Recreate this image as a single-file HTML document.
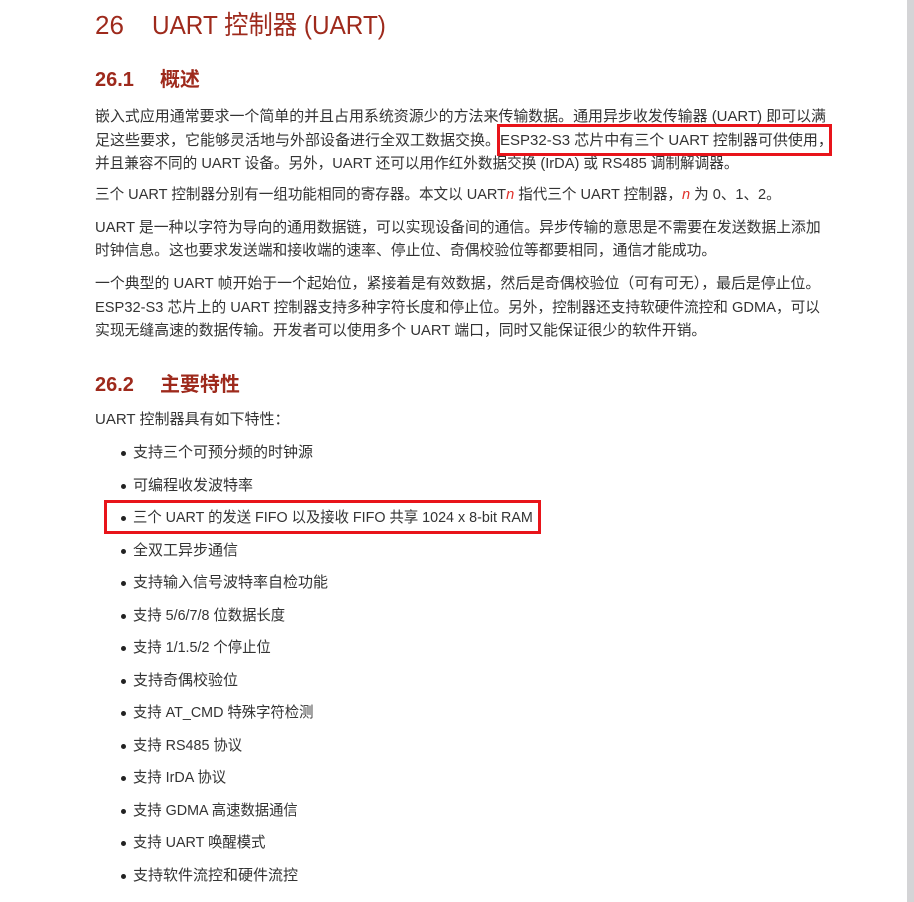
<!DOCTYPE html>
<html><head><meta charset="utf-8"><style>
html,body{margin:0;padding:0;background:#fff;}
body{width:914px;height:902px;position:relative;overflow:hidden;font-family:"Liberation Sans","Noto Sans CJK SC",sans-serif;color:#333;}
.strip{position:absolute;left:907px;top:0;width:7px;height:902px;background:#d4d4d6;}
.l{position:absolute;left:95px;white-space:nowrap;font-size:15px;line-height:20px;transform-origin:0 0;}
.h{position:absolute;left:95px;white-space:nowrap;color:#9e2a1c;}
.b{position:absolute;left:133px;white-space:nowrap;font-size:15px;line-height:20px;}
.b:before{content:"";position:absolute;left:-12px;top:8px;width:5px;height:5px;border-radius:50%;background:#222;}
.b span{display:inline-block;transform-origin:0 0;transform:scaleX(0.955);}
.n{color:#e0302a;font-style:italic;}
.box{position:absolute;border:3px solid #e8141a;box-sizing:border-box;}
</style></head><body>
<div class="strip"></div>
<div class="h" style="top:8px;font-size:26px;line-height:34px;">26<span style="display:inline-block;width:28px"></span><span style="display:inline-block;transform-origin:0 0;transform:scaleX(0.936)">UART 控制器 (UART)</span></div>
<div class="h" style="top:66px;font-size:20px;line-height:28px;font-weight:bold;">26.1<span style="display:inline-block;width:26px"></span>概述</div>
<div class="l" style="top:107px;transform:scaleX(0.996)">嵌入式应用通常要求一个简单的并且占用系统资源少的方法来传输数据。通用异步收发传输器 (UART) 即可以满</div>
<div class="l" style="top:131px">足这些要求，它能够灵活地与外部设备进行全双工数据交换。ESP32-S3 芯片中有三个 UART 控制器可供使用，</div>
<div class="l" style="top:154px;transform:scaleX(0.974)">并且兼容不同的 UART 设备。另外，UART 还可以用作红外数据交换 (IrDA) 或 RS485 调制解调器。</div>
<div class="l" style="top:185px;transform:scaleX(0.971)">三个 UART 控制器分别有一组功能相同的寄存器。本文以 UART<span class="n">n</span> 指代三个 UART 控制器，<span class="n">n</span> 为 0、1、2。</div>
<div class="l" style="top:218px;transform:scaleX(0.988)">UART 是一种以字符为导向的通用数据链，可以实现设备间的通信。异步传输的意思是不需要在发送数据上添加</div>
<div class="l" style="top:241px;transform:scaleX(0.986)">时钟信息。这也要求发送端和接收端的速率、停止位、奇偶校验位等都要相同，通信才能成功。</div>
<div class="l" style="top:274px;transform:scaleX(0.992)">一个典型的 UART 帧开始于一个起始位，紧接着是有效数据，然后是奇偶校验位（可有可无），最后是停止位。</div>
<div class="l" style="top:298px;transform:scaleX(0.977)">ESP32-S3 芯片上的 UART 控制器支持多种字符长度和停止位。另外，控制器还支持软硬件流控和 GDMA，可以</div>
<div class="l" style="top:321px;transform:scaleX(0.988)">实现无缝高速的数据传输。开发者可以使用多个 UART 端口，同时又能保证很少的软件开销。</div>
<div class="h" style="top:371px;font-size:20px;line-height:28px;font-weight:bold;">26.2<span style="display:inline-block;width:26px"></span>主要特性</div>
<div class="l" style="top:410px">UART 控制器具有如下特性：</div>
<div class="b" style="top:443px">支持三个可预分频的时钟源</div>
<div class="b" style="top:476px">可编程收发波特率</div>
<div class="b" style="top:508px"><span>三个 UART 的发送 FIFO 以及接收 FIFO 共享 1024 x 8-bit RAM</span></div>
<div class="b" style="top:541px">全双工异步通信</div>
<div class="b" style="top:573px">支持输入信号波特率自检功能</div>
<div class="b" style="top:606px"><span>支持 5/6/7/8 位数据长度</span></div>
<div class="b" style="top:638px"><span>支持 1/1.5/2 个停止位</span></div>
<div class="b" style="top:671px">支持奇偶校验位</div>
<div class="b" style="top:703px"><span>支持 AT_CMD 特殊字符检测</span></div>
<div class="b" style="top:736px"><span>支持 RS485 协议</span></div>
<div class="b" style="top:768px"><span>支持 IrDA 协议</span></div>
<div class="b" style="top:801px"><span>支持 GDMA 高速数据通信</span></div>
<div class="b" style="top:833px"><span>支持 UART 唤醒模式</span></div>
<div class="b" style="top:866px">支持软件流控和硬件流控</div>
<div class="box" style="left:497px;top:124px;width:335px;height:32px"></div>
<div class="box" style="left:104px;top:500px;width:437px;height:34px"></div>
</body></html>
